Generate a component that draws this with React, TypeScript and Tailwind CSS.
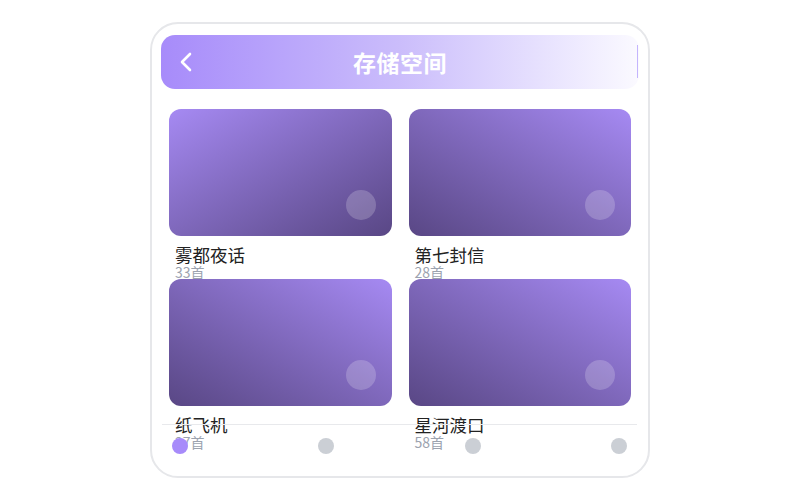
const albums = [
  { name: '雾都夜话', count: '33首', bg: 'bg-gradient-to-br from-[#a68af3] to-[#594785]' },
  { name: '第七封信', count: '28首', bg: 'bg-gradient-to-bl from-[#a68af3] to-[#594785]' },
  { name: '纸飞机', count: '27首', bg: 'bg-gradient-to-bl from-[#a68af3] to-[#594785]' },
  { name: '星河渡口', count: '58首', bg: 'bg-gradient-to-bl from-[#a68af3] to-[#594785]' },
]

export default function App() {
  return (
    <div className="w-[800px] h-[500px] bg-white flex justify-center font-['Noto_Sans_CJK_SC','Noto_Sans',sans-serif]">
      <div className="relative mt-[22px] w-[500px] h-[456px] border-2 border-[#e6e7ea] rounded-[28px] overflow-hidden bg-white">
        {/* Header */}
        <div className="relative ml-[9px] mt-[11px] w-[478px] h-[54px] rounded-[14px] bg-gradient-to-r from-[#a78bfa] via-[#cbbdfb] to-[#fbfaff] flex items-center justify-center">
          <svg className="absolute left-[17px] top-[17px]" width="16" height="20" viewBox="0 0 16 20" fill="none">
            <path d="M12 2 L4 10 L12 18" stroke="white" strokeWidth="2.6" strokeLinecap="round" strokeLinejoin="round" />
          </svg>
          <h1 className="text-white text-[23px] font-bold tracking-[0.5px]">存储空间</h1>
          <div className="absolute right-[1px] top-[10px] w-px h-[33px] bg-[#c4b5fd]" />
        </div>

        {/* Albums */}
        <div className="grid grid-cols-2 gap-x-[17px] px-[17px] mt-[20px]">
          {albums.map((a) => (
            <div key={a.name}>
              <div className={`relative h-[127px] rounded-[12px] ${a.bg}`}>
                <div className="absolute right-[16px] bottom-[16px] w-[30px] h-[30px] rounded-full bg-white/20" />
              </div>
              <p className="mt-[9px] pl-[6px] text-[17.5px] leading-[20px] text-[#222]">{a.name}</p>
              <p className="pl-[6px] text-[14px] leading-[14px] text-[#9ca3af]">{a.count}</p>
            </div>
          ))}
        </div>

        {/* Bottom nav */}
        <div className="absolute left-[10px] right-[11px] top-[400px] border-t border-[#e8e9ec] flex justify-between px-[10px] pt-[13px]">
          <span className="w-[16px] h-[16px] rounded-full bg-[#a78bfa]" />
          <span className="w-[16px] h-[16px] rounded-full bg-[#cbcfd5]" />
          <span className="w-[16px] h-[16px] rounded-full bg-[#cbcfd5]" />
          <span className="w-[16px] h-[16px] rounded-full bg-[#cbcfd5]" />
        </div>
      </div>
    </div>
  )
}
